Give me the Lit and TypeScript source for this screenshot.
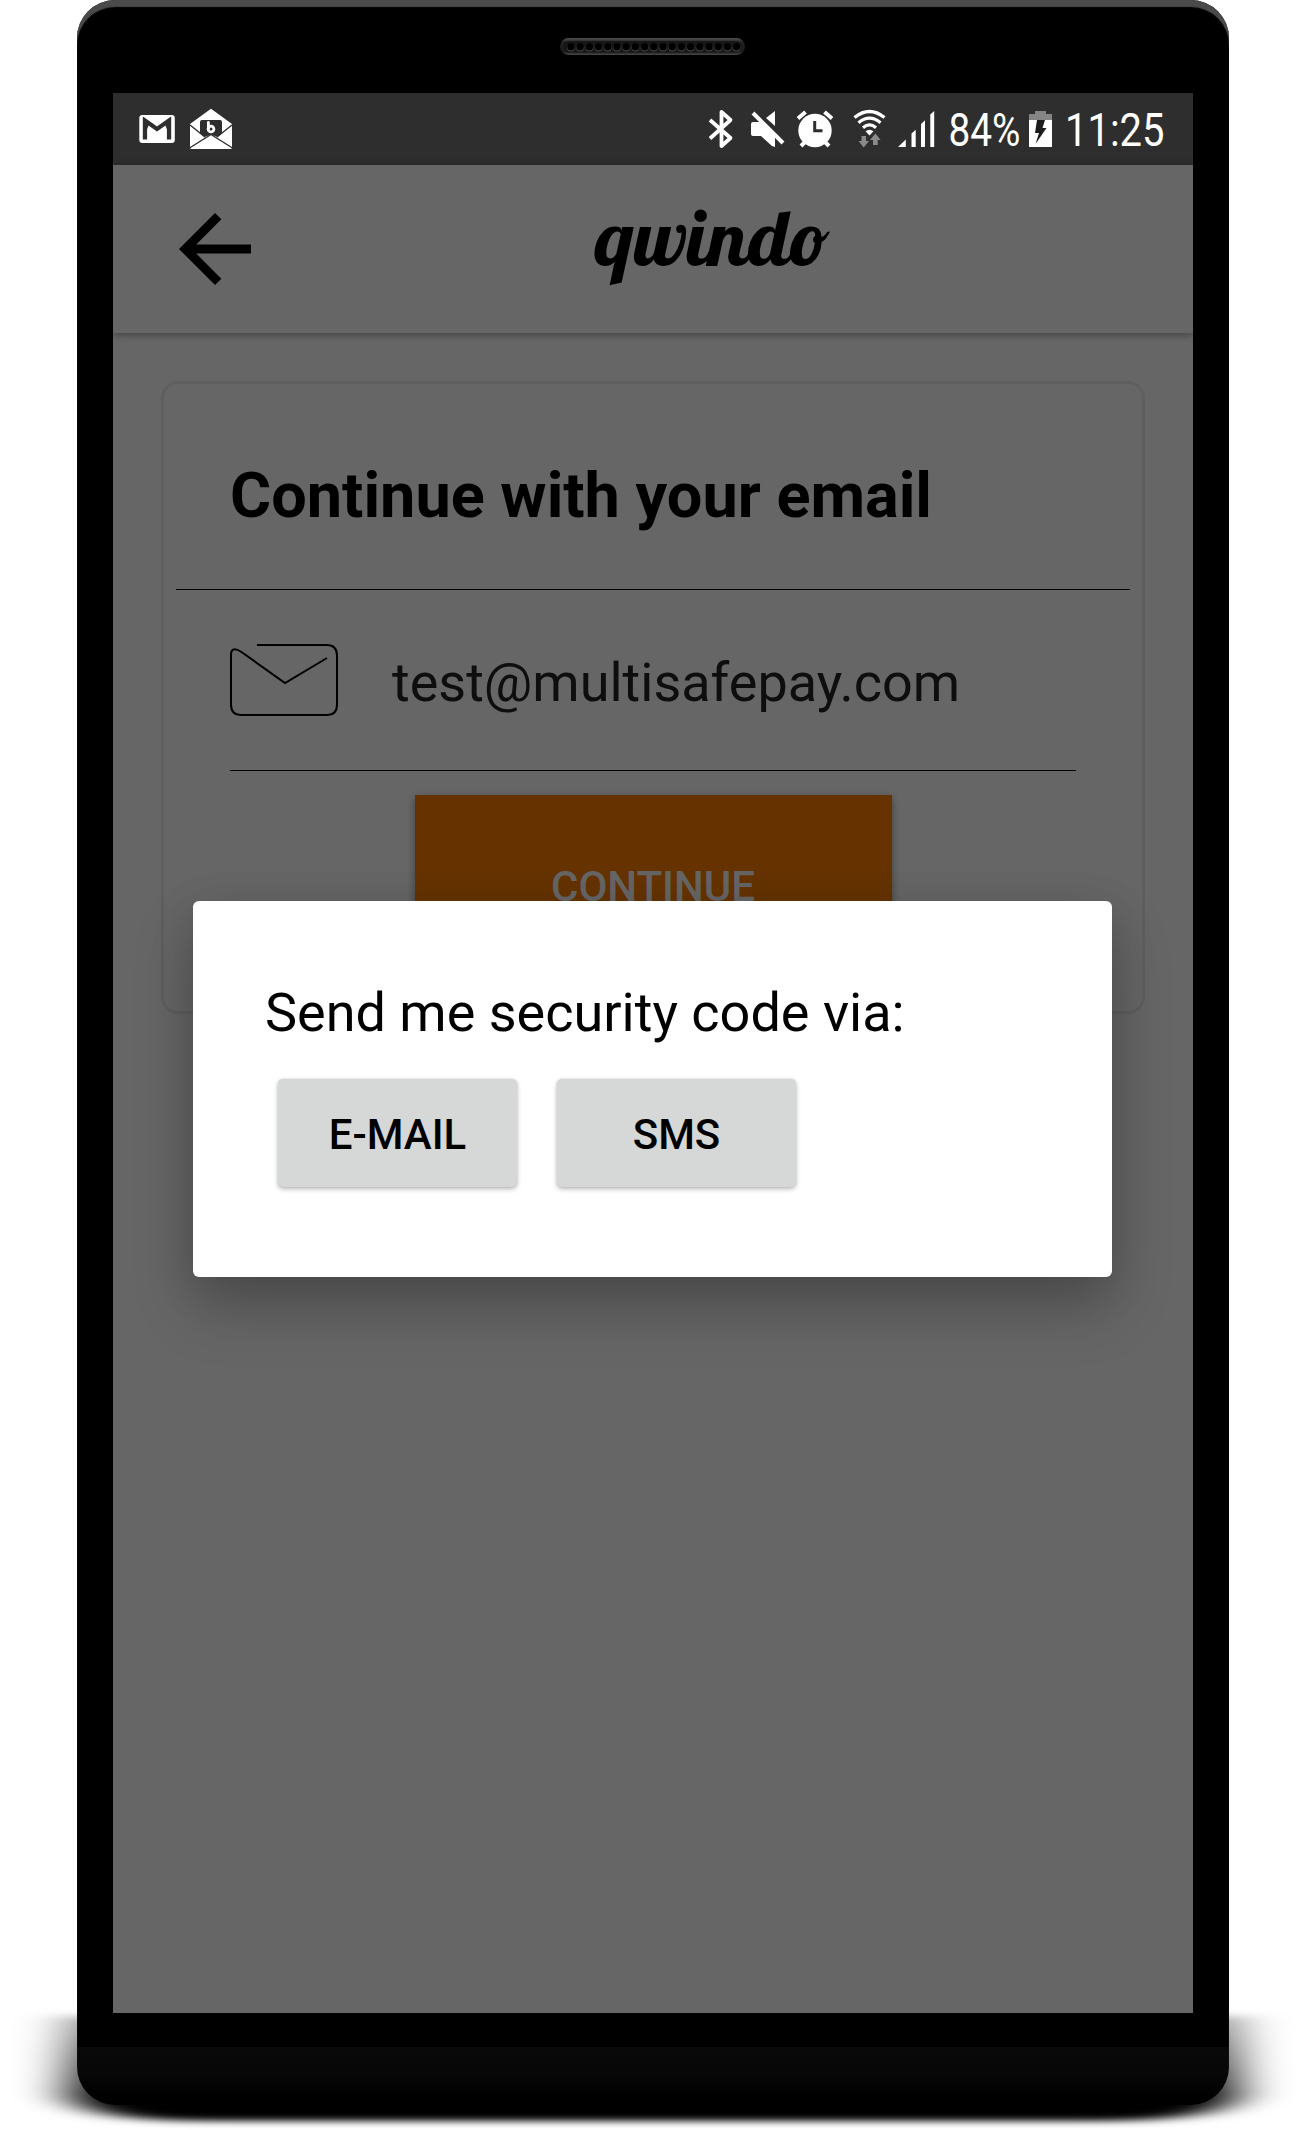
import { LitElement, html, css, svg } from "lit";
import { customElement } from "lit/decorators.js";

@customElement("status-bar")
class StatusBar extends LitElement {
  static styles = css`
    :host { display: flex; height: 72px; background: #2e2e2e; }
    svg { display: block; flex: none; overflow: visible; }
    .gap { flex: 1; }
    text { font-family: Roboto, sans-serif; font-size: 46px; fill: #fff; }
  `;
  render() {
    return html`
      <svg width="72" height="72" viewBox="113 93 72 72">
        <rect x="139.3" y="115" width="35.5" height="28" rx="3" fill="#fff" />
        <path d="M145 139.5V120.5L157 129L169 120.5V139.5" fill="none" stroke="#2e2e2e" stroke-width="4.2" />
        <path d="M142.9 139.5V117.5L150 122Z M171.1 139.5V117.5L164 122Z" fill="#2e2e2e" />
      </svg>
      <svg width="60" height="72" viewBox="185 93 60 72">
        <path d="M211 108.8L232 124V147.500Q232 149 230.500 149H191.500Q190 149 190 147.500V124Z" fill="#fff" />
        <path d="M190 125L205 137M232 125L217 137M189.500 148L211 134.500L232.500 148" fill="none" stroke="#2e2e2e" stroke-width="1.400" />
        <path d="M200 122q0-2 2-2h18q2 0 2 2v11l-4.500 4L211 134.500L204.500 137L200 133Z" fill="#2e2e2e" />
        <path d="M208.400 122.500V129" stroke="#fff" stroke-width="2.800" stroke-linecap="round" />
        <circle cx="211" cy="129" r="2.900" fill="none" stroke="#fff" stroke-width="2.800" />
      </svg>
      <span class="gap"></span>
      <svg width="42" height="72" viewBox="700 93 42 72">
        <path d="M710 120L730.500 138L721.500 146V112L730.500 120L710 138.500" fill="none" stroke="#fff" stroke-width="3.800" stroke-linejoin="round" />
      </svg>
      <svg width="50" height="72" viewBox="742 93 50 72">
        <path d="M775 111V126L766 118Z M751 124q0-2 2-2h6.500L775 136.500V147L772 146L761 136H753q-2 0-2-2Z" fill="#fff" />
        <path d="M753 113L783 143" stroke="#fff" stroke-width="4" />
      </svg>
      <svg width="50" height="72" viewBox="792 93 50 72">
        <circle cx="815" cy="130.500" r="16.700" fill="#fff" />
        <path d="M798 118.500L805.500 112M832 118.500L824.500 112M801 146L806 141M829 146L824 141" stroke="#fff" stroke-width="4" />
        <path d="M814.700 121V130.800H822.500" fill="none" stroke="#2e2e2e" stroke-width="3" />
      </svg>
      <svg width="50" height="72" viewBox="842 93 50 72">
        <g fill="none" stroke="#fff" stroke-width="3.200">
          <path d="M854.500 117.500Q869.500 105.500 884.500 117.500" />
          <path d="M858.500 122.800Q869.500 113.500 880.500 122.800" />
          <path d="M863 127.800Q869.500 122 876 127.800" />
        </g>
        <path d="M865.500 131.300Q869.500 128 873.500 131.300L869.500 135.500Z" fill="#fff" />
        <path d="M861.500 136h4.500v5h3L863.700 147.500L858.500 141h3Z M873 145v-5h-3L875.400 133.500L880.700 140h-3V145Z" fill="#8a8a8a" />
      </svg>
      <svg width="50" height="72" viewBox="892 93 50 72">
        <path d="M898 147L905.800 139.500V147Z M911.500 147V133.500L915.700 129.800V147Z M921 147V124L925 120.300V147Z M930.300 147V114.500L934.200 111V147Z" fill="#fff" />
      </svg>
      <svg width="82" height="72" viewBox="942 93 82 72">
        <text x="948.500" y="146" textLength="72" lengthAdjust="spacingAndGlyphs">84%</text>
      </svg>
      <svg width="34" height="72" viewBox="1024 93 34 72">
        <path d="M1035 111H1046V114H1052V120H1029V114H1035Z" fill="#858585" />
        <path d="M1029 120H1052V147H1029Z" fill="#fff" />
        <path d="M1037 120H1045L1042.500 128H1046.500L1035.500 144L1039 133H1035Z" fill="#1c1c1c" />
      </svg>
      <svg width="135" height="72" viewBox="1058 93 135 72">
        <text x="1065" y="146" textLength="99.500" lengthAdjust="spacingAndGlyphs">11:25</text>
      </svg>
    `;
  }
}

@customElement("code-dialog")
class CodeDialog extends LitElement {
  static styles = css`
    :host {
      display: block; box-sizing: border-box; width: 919px; height: 376px;
      padding: 80px 72px 0; background: #fff; border-radius: 6px; color: #000;
      box-shadow: 0 30px 60px rgba(0,0,0,.22), 0 10px 45px rgba(0,0,0,.12);
      font-family: Roboto, sans-serif;
    }
    .prompt { font-size: 54px; line-height: 63px; white-space: nowrap; }
    .actions { display: flex; gap: 40px; padding: 35px 13px 0; }
    .action {
      box-sizing: border-box; width: 239px; height: 108px; padding: 3px 0 0; border: 0;
      border-radius: 5px; background: #d6d8d7; color: #000;
      font: 500 42px Roboto, sans-serif;
      box-shadow: 0 2px 5px rgba(0,0,0,.28), 0 0 2px rgba(0,0,0,.12);
    }
  `;
  render() {
    return html`
      <div class="prompt">Send me security code via:</div>
      <div class="actions">
        <button class="action">E-MAIL</button>
        <button class="action">SMS</button>
      </div>
    `;
  }
}

@customElement("app-root")
class AppRoot extends LitElement {
  static styles = css`
    :host { display: block; position: relative; width: 1305px; height: 2130px; overflow: hidden; background: #fff; font-family: Roboto, sans-serif; }
    svg { display: block; flex: none; }
    .ground { position: absolute; left: 0; bottom: 0; }
    .phone {
      position: relative; box-sizing: border-box; width: 1152px; height: 2105px; margin-left: 77px;
      display: flex; flex-direction: column; align-items: center; border-radius: 38px; overflow: hidden;
      background: linear-gradient(#000 2047px, #090909 2047px, #070707 2075px, #000 2100px);
      box-shadow: inset 0 7px 1px #4a4a4a;
    }
    .top { height: 93px; width: 100%; }
    .screen { position: relative; width: 1080px; height: 1920px; display: flex; flex-direction: column; background: #fff; }
    .header { height: 168px; display: flex; align-items: center; background: #fff; box-shadow: 0 2px 8px rgba(0,0,0,.35); padding-left: 48px; }
    .brand { margin-left: 301px; overflow: visible; }
    .wordmark { font-family: Lobster, "Liberation Serif", serif; font-size: 78px; }
    .card { box-sizing: border-box; margin: 48px; height: 633px; border: 3px solid #eee; border-radius: 17px; display: flex; flex-direction: column; }
    .title { box-sizing: border-box; height: 205px; padding: 18px 66px 0; display: flex; align-items: center; font-size: 63px; font-weight: 700; color: #000; white-space: nowrap; }
    .rule { height: 1px; margin: 0 12px; background: #000; flex: none; }
    .rule.short { margin: 0 66px; }
    .field { height: 180px; display: flex; align-items: center; padding-left: 65px; }
    .address { padding: 5px 0 0 53px; font-size: 54px; color: #242424; white-space: nowrap; }
    .continue {
      box-sizing: border-box; align-self: center; width: 477px; height: 180px; margin-top: 24px; padding: 3px 0 0; border: 0;
      background: #ff8000; color: #fff; font: 500 42px Roboto, sans-serif; box-shadow: 0 3px 8px rgba(0,0,0,.4);
    }
    .scrim { position: absolute; inset: 72px 0 0 0; background: rgba(0,0,0,.6); display: flex; align-items: flex-start; }
    .scrim code-dialog { margin: 736px 0 0 80px; }
  `;
  render() {
    const holes = Array.from({ length: 19 }, (_, i) => 571 + i * 9.2);
    return html`
      <svg class="ground" width="1305" height="150" viewBox="0 1980 1305 150">
        <defs>
          <linearGradient id="fall" gradientUnits="userSpaceOnUse" x1="0" y1="2012" x2="0" y2="2100">
            <stop offset="0" stop-opacity=".35" /><stop offset="1" />
          </linearGradient>
          <filter id="soft" filterUnits="userSpaceOnUse" x="-60" y="1960" width="1425" height="200">
            <feGaussianBlur stdDeviation="25 3.500" />
          </filter>
        </defs>
        <path d="M68 2016H1238V2094Q1225 2120 1110 2121H196Q81 2120 68 2094Z" fill="url(#fall)" filter="url(#soft)" />
      </svg>
      <div class="phone">
        <svg class="top" viewBox="77 0 1152 93">
          <defs>
            <linearGradient id="grille" x1="0" y1="0" x2="0" y2="1">
              <stop offset="0" stop-color="#505050" /><stop offset=".25" stop-color="#222" /><stop offset=".8" stop-color="#1c1c1c" /><stop offset="1" stop-color="#484848" />
            </linearGradient>
          </defs>
          <rect x="560" y="38" width="185" height="17" rx="8.500" fill="url(#grille)" />
          <rect x="563" y="41" width="179" height="11.500" rx="5.700" fill="#171717" />
          ${holes.map((x) => svg`<circle cx=${x} cy="47.500" r="3.900" fill="#4a4a4a" /><circle cx=${x} cy="46.800" r="3.700" fill="#000" />`)}
        </svg>
        <div class="screen">
          <status-bar></status-bar>
          <div class="header">
            <svg width="108" height="108" viewBox="0 0 24 24">
              <path d="M20 11H7.830l5.590-5.590L12 4l-8 8 8 8 1.410-1.410L7.830 13H20v-2z" />
            </svg>
            <svg class="brand" width="270" height="110" viewBox="570 194 270 110">
              <text class="wordmark" x="595.500" y="265.500" textLength="234.500" lengthAdjust="spacingAndGlyphs">qwindo</text>
            </svg>
          </div>
          <div class="card">
            <div class="title">Continue with your email</div>
            <div class="rule"></div>
            <div class="field">
              <svg width="110" height="74" viewBox="229 643 110 74">
                <path d="M257 645H326.500Q337 645 337 655.500V704.500Q337 715 326.500 715H241.500Q231 715 231 704.500V655Q231 645.500 241.500 652L285 683L327 658" fill="none" stroke="#000" stroke-width="2" />
              </svg>
              <div class="address">test@multisafepay.com</div>
            </div>
            <div class="rule short"></div>
            <button class="continue">CONTINUE</button>
          </div>
          <div class="scrim"><code-dialog></code-dialog></div>
        </div>
      </div>
    `;
  }
}
